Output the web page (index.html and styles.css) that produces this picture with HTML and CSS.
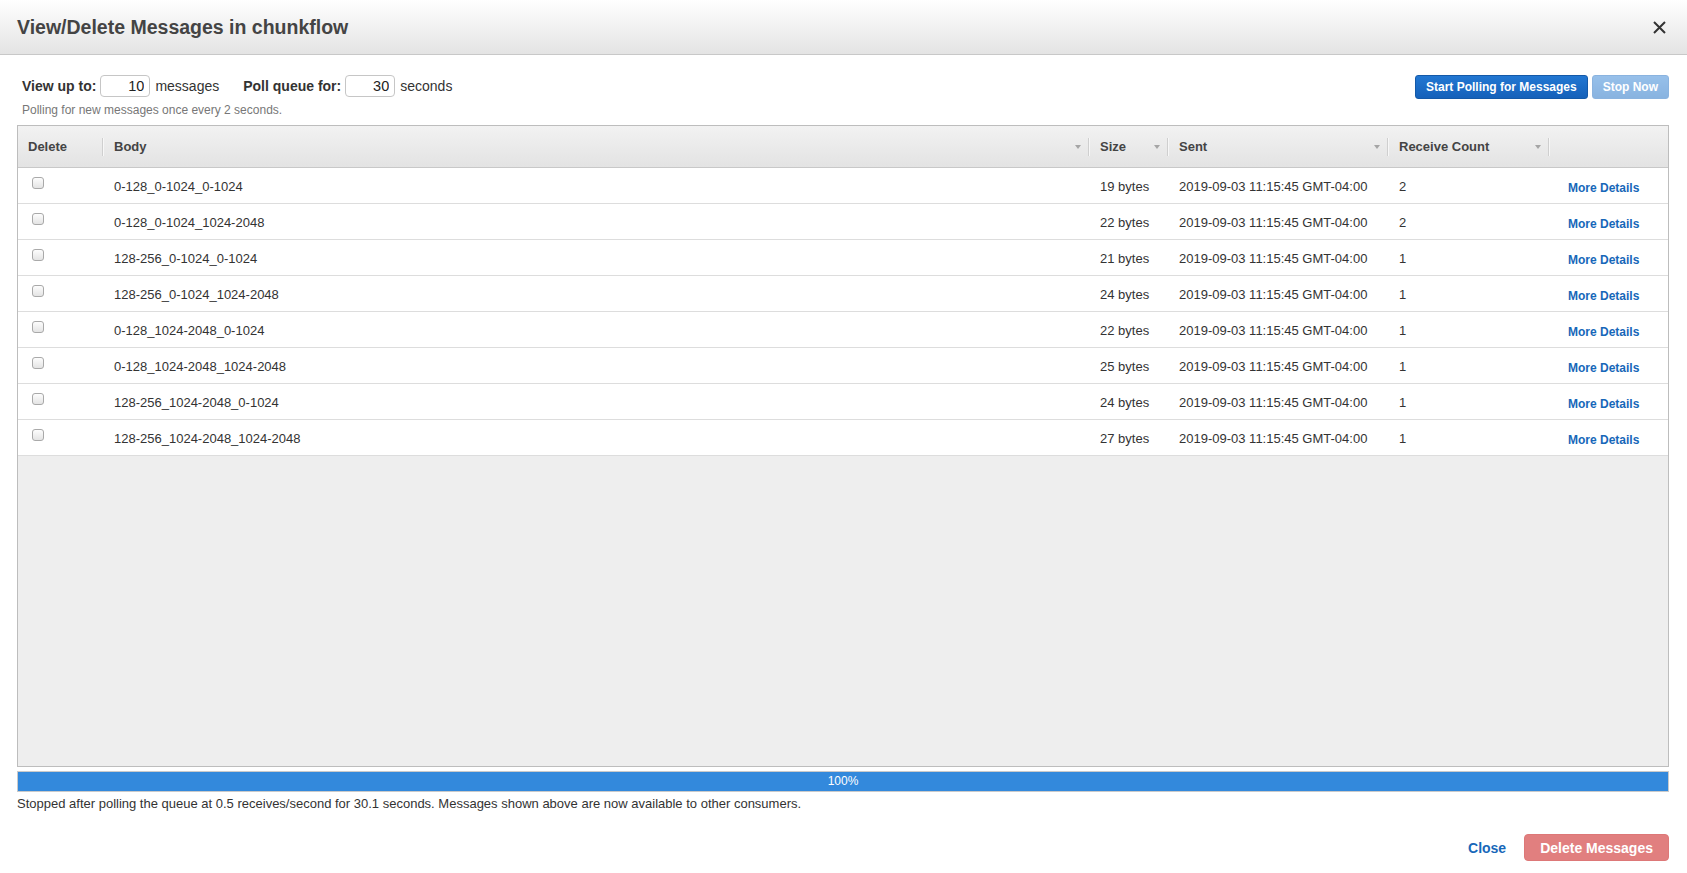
FILE: index.html
```html
<!DOCTYPE html>
<html lang="en" dir="ltr">
  <head>
    <meta charset="utf-8">
    <title>View/Delete Messages in chunkflow</title>
    <link rel="stylesheet" href="styles.css">
  </head>
  <body>

    <div class="modal">
      <header class="modal-head">
        <h1>View/Delete Messages in chunkflow</h1>
        <button class="close" title="Close">
          <svg width="13" height="13" viewBox="0 0 13 13"><path d="M1 1L12 12M12 1L1 12" stroke="#333" stroke-width="2" fill="none"/></svg>
        </button>
      </header>

      <section class="modal-body">
        <div class="controls">
          <div class="toolbar">
            <div class="fields">
              <label>View up to:</label>
              <input type="text" value="10">
              <span>messages</span>
              <label class="second">Poll queue for:</label>
              <input type="text" value="30">
              <span>seconds</span>
            </div>
            <div class="actions">
              <button class="btn primary">Start Polling for Messages</button>
              <button class="btn primary disabled">Stop Now</button>
            </div>
          </div>
          <p class="hint">Polling for new messages once every 2 seconds.</p>
        </div>

        <div class="grid">
          <div class="row head">
            <div class="th first">Delete</div>
            <div class="th"><span class="sep"></span><span class="label">Body</span><span class="arrow"></span></div>
            <div class="th"><span class="sep"></span><span class="label">Size</span><span class="arrow"></span></div>
            <div class="th"><span class="sep"></span><span class="label">Sent</span><span class="arrow"></span></div>
            <div class="th"><span class="sep"></span><span class="label">Receive Count</span><span class="arrow"></span></div>
            <div class="th"><span class="sep"></span></div>
          </div>

          <div class="row item">
            <div class="td check"><input type="checkbox"></div>
            <div class="td">0-128_0-1024_0-1024</div>
            <div class="td">19 bytes</div>
            <div class="td">2019-09-03 11:15:45 GMT-04:00</div>
            <div class="td">2</div>
            <div class="td more"><a>More Details</a></div>
          </div>
          <div class="row item">
            <div class="td check"><input type="checkbox"></div>
            <div class="td">0-128_0-1024_1024-2048</div>
            <div class="td">22 bytes</div>
            <div class="td">2019-09-03 11:15:45 GMT-04:00</div>
            <div class="td">2</div>
            <div class="td more"><a>More Details</a></div>
          </div>
          <div class="row item">
            <div class="td check"><input type="checkbox"></div>
            <div class="td">128-256_0-1024_0-1024</div>
            <div class="td">21 bytes</div>
            <div class="td">2019-09-03 11:15:45 GMT-04:00</div>
            <div class="td">1</div>
            <div class="td more"><a>More Details</a></div>
          </div>
          <div class="row item">
            <div class="td check"><input type="checkbox"></div>
            <div class="td">128-256_0-1024_1024-2048</div>
            <div class="td">24 bytes</div>
            <div class="td">2019-09-03 11:15:45 GMT-04:00</div>
            <div class="td">1</div>
            <div class="td more"><a>More Details</a></div>
          </div>
          <div class="row item">
            <div class="td check"><input type="checkbox"></div>
            <div class="td">0-128_1024-2048_0-1024</div>
            <div class="td">22 bytes</div>
            <div class="td">2019-09-03 11:15:45 GMT-04:00</div>
            <div class="td">1</div>
            <div class="td more"><a>More Details</a></div>
          </div>
          <div class="row item">
            <div class="td check"><input type="checkbox"></div>
            <div class="td">0-128_1024-2048_1024-2048</div>
            <div class="td">25 bytes</div>
            <div class="td">2019-09-03 11:15:45 GMT-04:00</div>
            <div class="td">1</div>
            <div class="td more"><a>More Details</a></div>
          </div>
          <div class="row item">
            <div class="td check"><input type="checkbox"></div>
            <div class="td">128-256_1024-2048_0-1024</div>
            <div class="td">24 bytes</div>
            <div class="td">2019-09-03 11:15:45 GMT-04:00</div>
            <div class="td">1</div>
            <div class="td more"><a>More Details</a></div>
          </div>
          <div class="row item">
            <div class="td check"><input type="checkbox"></div>
            <div class="td">128-256_1024-2048_1024-2048</div>
            <div class="td">27 bytes</div>
            <div class="td">2019-09-03 11:15:45 GMT-04:00</div>
            <div class="td">1</div>
            <div class="td more"><a>More Details</a></div>
          </div>
        </div>

        <div class="progress">
          <div class="progress-fill" style="width: 100%">100%</div>
        </div>
        <p class="status">Stopped after polling the queue at 0.5 receives/second for 30.1 seconds. Messages shown above are now available to other consumers.</p>
      </section>

      <footer class="modal-foot">
        <a class="link">Close</a>
        <button class="btn danger">Delete Messages</button>
      </footer>
    </div>

  </body>
</html>
```

FILE: styles.css
```css
* { box-sizing: border-box; }

body {
  margin: 0;
  background-color: #fff;
  color: #333;
  font-family: "Liberation Sans", Arial, sans-serif;
}

.modal-head {
  display: flex;
  justify-content: space-between;
  align-items: center;
  height: 55px;
  padding: 0 21px 0 17px;
  background: linear-gradient(#fff, #e4e4e4);
  border-bottom: 1px solid #c8c8c8;
}

.modal-head h1 {
  margin: 0;
  font-size: 19.5px;
  font-weight: bold;
  color: #444;
}

.close {
  display: flex;
  padding: 0;
  border: none;
  background: none;
  cursor: pointer;
}

.modal-body {
  padding: 20px 18px 0 17px;
}

.controls {
  padding-left: 5px;
}

.toolbar {
  display: flex;
  justify-content: space-between;
  align-items: flex-start;
}

.fields {
  display: flex;
  align-items: center;
  height: 22px;
  font-size: 14px;
  color: #333;
}

.fields label {
  font-weight: bold;
}

.fields label.second {
  margin-left: 24px;
}

.fields input {
  width: 50px;
  height: 22px;
  margin: 0 5px 0 4px;
  padding: 0 5px;
  border: 1px solid #c6c6c6;
  border-radius: 4px;
  font-family: "Liberation Sans", Arial, sans-serif;
  font-size: 14.5px;
  color: #222;
  text-align: right;
  outline: none;
}

.actions {
  display: flex;
  gap: 4px;
}

.btn {
  height: 24px;
  padding: 0 10px;
  border: 1px solid;
  border-radius: 3px;
  font-family: "Liberation Sans", Arial, sans-serif;
  font-size: 12px;
  font-weight: bold;
  color: #fff;
  cursor: pointer;
}

.btn.primary {
  background: linear-gradient(#2277d2, #1561ba);
  border-color: #1459a8;
}

.btn.primary.disabled {
  background: linear-gradient(#97c0ea, #88b3e0);
  border-color: #8ab3df;
  cursor: default;
}

.btn.danger {
  height: 27px;
  padding: 0 15px;
  border-radius: 4px;
  background: #e17f7f;
  border-color: #dd7878;
  font-size: 14px;
}

.hint {
  margin: 5px 0 8px;
  font-size: 12px;
  line-height: 13px;
  color: #777;
}

.grid {
  display: flex;
  flex-direction: column;
  height: 642px;
  border: 1px solid #bdbdbd;
  background-color: #eee;
}

.row {
  display: grid;
  grid-template-columns: 84px 986px 79px 220px 161px 1fr;
}

.head {
  height: 42px;
  background: linear-gradient(#f2f2f2, #e3e3e3);
  border-bottom: 1px solid #c8c8c8;
}

.th {
  display: flex;
  align-items: center;
  padding-right: 7px;
  font-size: 13px;
  font-weight: bold;
  color: #444;
}

.th.first {
  padding-left: 10px;
}

.th .sep {
  width: 1px;
  height: 18px;
  margin-right: 11px;
  background-color: #cfcfcf;
  box-shadow: 1px 0 0 #f7f7f7;
}

.th .label {
  flex: 1;
}

.th .arrow {
  border-left: 3.5px solid transparent;
  border-right: 3.5px solid transparent;
  border-top: 4px solid #a5a5a5;
}

.item {
  height: 36px;
  background-color: #fff;
  border-bottom: 1px solid #ddd;
}

.td {
  padding: 11px 0 0 12px;
  font-size: 13px;
  line-height: 16px;
  color: #333;
  white-space: nowrap;
}

.td.check {
  padding: 9px 0 0 14px;
}

.td.check input {
  appearance: none;
  display: block;
  width: 12px;
  height: 12px;
  margin: 0;
  border: 1px solid #a9a9a9;
  border-radius: 3px;
  background: linear-gradient(#fdfdfd, #e4e4e4);
}

.td.more {
  padding-left: 20px;
  padding-top: 12px;
}

a {
  color: #1767b9;
  font-weight: bold;
  text-decoration: none;
  cursor: pointer;
}

.td.more a {
  font-size: 12px;
}

.progress {
  height: 21px;
  margin-top: 4px;
  border: 1px solid #cacaca;
  background-color: #f2f2f2;
}

.progress-fill {
  height: 100%;
  background-color: #3389dc;
  color: #fff;
  font-size: 12px;
  line-height: 19px;
  text-align: center;
}

.status {
  margin: 4px 0 0;
  font-size: 13px;
  line-height: 15px;
  color: #333;
}

.modal-foot {
  display: flex;
  justify-content: flex-end;
  align-items: center;
  gap: 18px;
  padding: 23px 18px 0 17px;
}

.link {
  font-size: 14px;
}
```
